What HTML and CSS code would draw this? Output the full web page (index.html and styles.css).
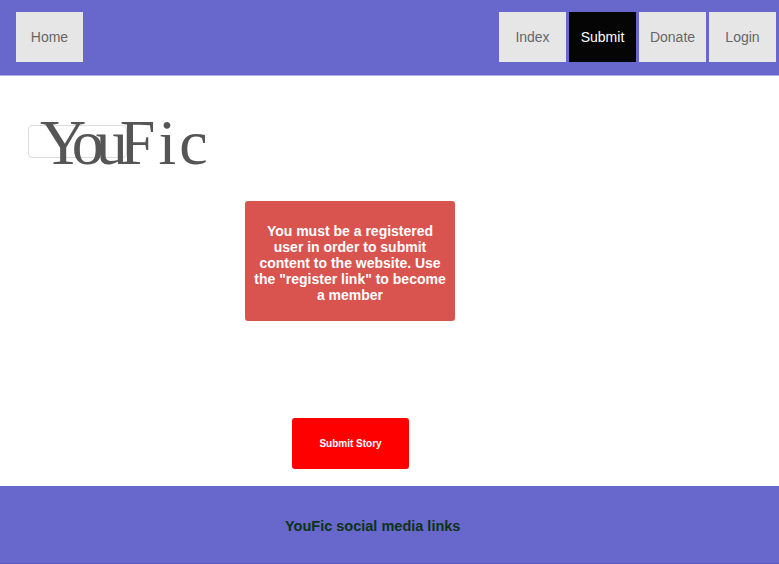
FILE: index.html
```html
<!DOCTYPE html>
<html>
<head>
<meta charset="utf-8">
<link rel="stylesheet" href="styles.css">
</head>
<body>
<header class="topbar">
  <nav class="nav-left"><a class="nav-btn">Home</a></nav>
  <nav class="nav-right">
    <a class="nav-btn">Index</a>
    <a class="nav-btn active">Submit</a>
    <a class="nav-btn">Donate</a>
    <a class="nav-btn">Login</a>
  </nav>
</header>
<main class="content">
  <div class="brand">
    <span class="brand-box"></span>
    <h1 class="brand-title"><span class="you">You</span><span class="fic">Fic</span></h1>
  </div>
  <div class="notice">You must be a registered<br>user in order to submit<br>content to the website. Use<br>the "register link" to become<br>a member</div>
  <button class="submit-story">Submit Story</button>
</main>
<footer class="footer">
  <p class="footer-text">YouFic social media links</p>
</footer>
</body>
</html>
```
FILE: styles.css
```css
html, body {
  margin: 0;
  padding: 0;
  background: #ffffff;
  font-family: "Liberation Sans", Arial, sans-serif;
}
.topbar {
  background: #6767cc;
  border-bottom: 1px solid #b0b0ea;
  display: flex;
  justify-content: space-between;
  align-items: flex-start;
  padding: 12px 3px 0 16px;
  height: 63px;
}
.nav-left, .nav-right {
  display: flex;
  gap: 3px;
}
.nav-btn {
  width: 67px;
  height: 50px;
  display: flex;
  align-items: center;
  justify-content: center;
  background: #e6e6e6;
  color: #666666;
  font-size: 14px;
}
.nav-btn.active {
  background: #050505;
  color: #ffffff;
}
.content {
  height: 410px;
}
.brand {
  position: relative;
  height: 125px;
  padding-top: 34px;
  box-sizing: border-box;
}
.brand-box {
  position: absolute;
  left: 28px;
  top: 49px;
  width: 97px;
  height: 31px;
  border: 1px solid #dcdcdc;
  border-radius: 4px;
}
.brand-title {
  position: relative;
  margin: 0 0 0 40px;
  font-family: "Liberation Serif", "Times New Roman", serif;
  font-weight: normal;
  font-size: 64px;
  line-height: 65px;
  color: #555555;
  white-space: nowrap;
}
.you {
  letter-spacing: -8px;
}
.fic {
  letter-spacing: 3px;
}
.notice {
  margin-left: 245px;
  width: 210px;
  height: 120px;
  box-sizing: border-box;
  padding: 22px 0 0;
  background: #d9534f;
  border-radius: 3px;
  color: #ffffff;
  font-weight: bold;
  font-size: 14px;
  line-height: 16px;
  text-align: center;
  white-space: nowrap;
}
.submit-story {
  display: block;
  margin: 97px 0 0 292px;
  width: 117px;
  height: 51px;
  border: none;
  border-radius: 3px;
  background: #ff0000;
  color: #ffffff;
  font-family: "Liberation Sans", Arial, sans-serif;
  font-weight: bold;
  font-size: 10px;
}
.footer {
  height: 77px;
  background: #6767cc;
  border-bottom: 1px solid #5a5ac0;
  display: flex;
  align-items: center;
  padding-left: 285px;
}
.footer-text {
  margin: 0;
  padding-top: 2px;
  font-weight: bold;
  font-size: 14.5px;
  color: #0d3315;
}
```
